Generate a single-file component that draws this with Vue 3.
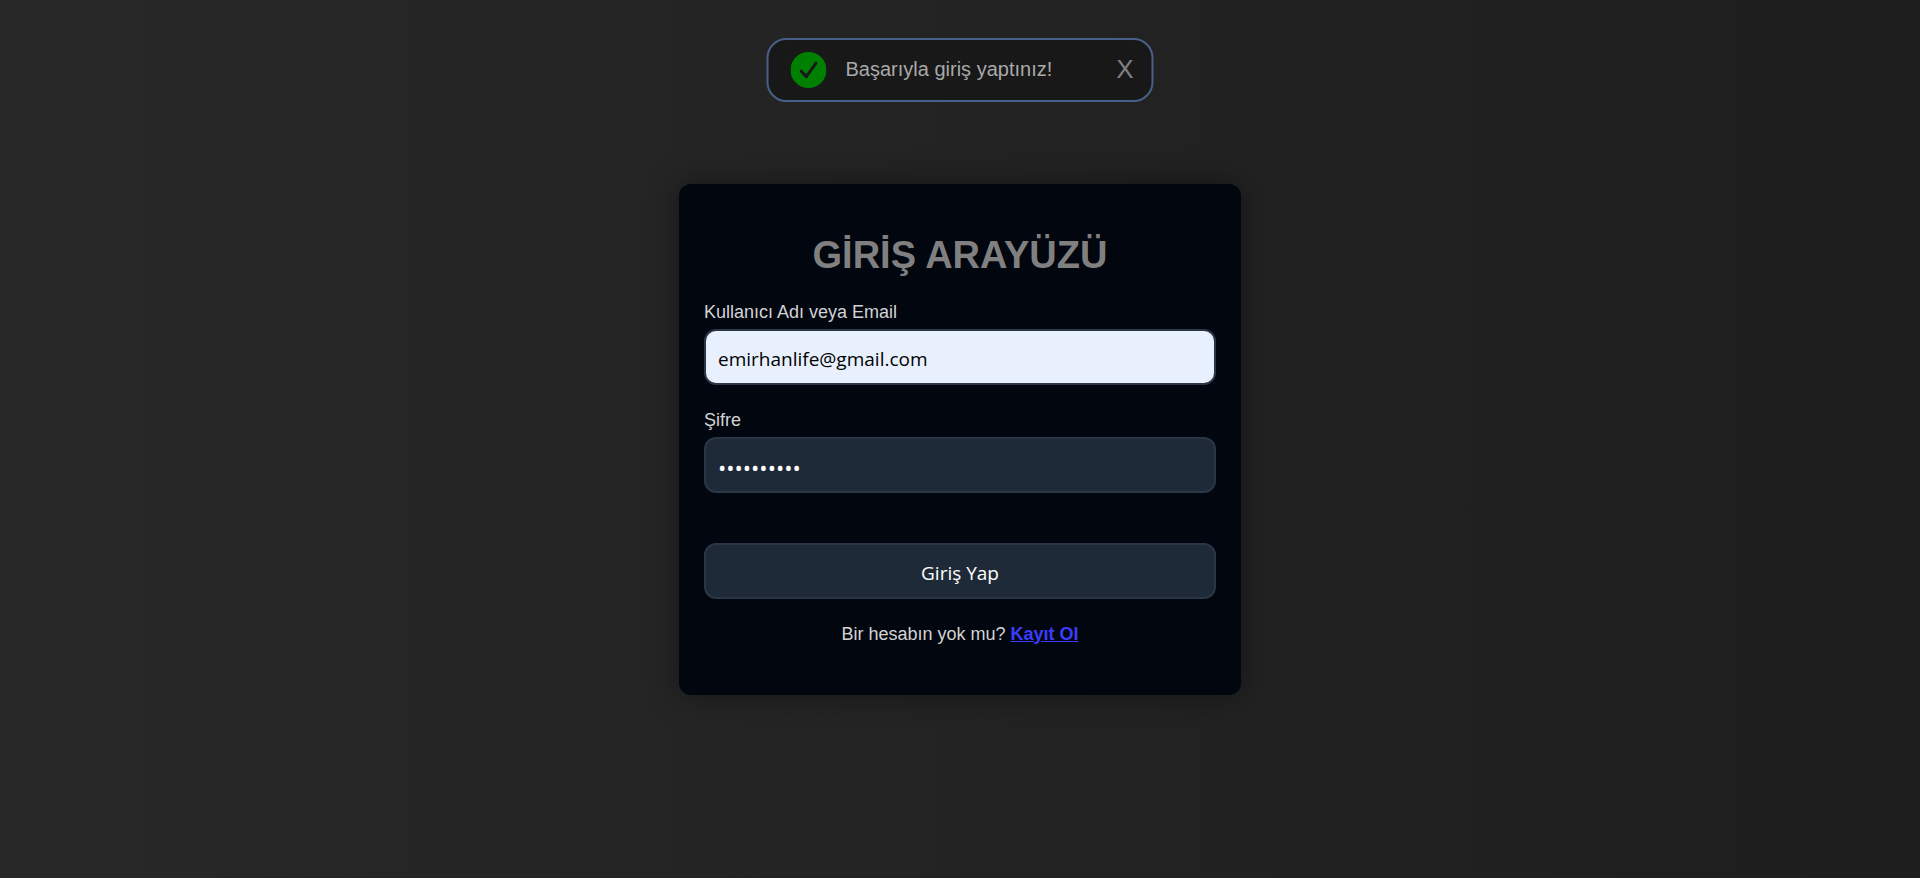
<script setup>
import { ref } from 'vue'

const account = ref('emirhanlife@gmail.com')
const password = ref('sifre12345')
const toastOpen = ref(true)
</script>

<template>
  <div class="page">
    <div v-if="toastOpen" class="toast" role="status">
      <svg class="toast-icon" viewBox="0 0 36 36" aria-hidden="true">
        <circle cx="18" cy="18" r="18" fill="#008000" />
        <path d="M10.7 19.2 L15.8 24.6 L25.5 11.2" fill="none" stroke="#181818" stroke-width="3" stroke-linecap="round" stroke-linejoin="round" />
      </svg>
      <span class="toast-text">Başarıyla giriş yaptınız!</span>
      <button class="toast-close" type="button" @click="toastOpen = false">X</button>
    </div>

    <form class="card" @submit.prevent>
      <h1>GİRİŞ ARAYÜZÜ</h1>
      <label for="account">Kullanıcı Adı veya Email</label>
      <input id="account" v-model="account" class="control filled" type="text" />
      <label for="password">Şifre</label>
      <input id="password" v-model="password" class="control secret" type="password" />
      <button class="control submit" type="submit">Giriş Yap</button>
      <p>Bir hesabın yok mu? <a href="#">Kayıt Ol</a></p>
    </form>
  </div>
</template>

<style>
body {
  margin: 0;
}
</style>

<style scoped>
.page {
  box-sizing: border-box;
  min-height: 100vh;
  display: flex;
  align-items: center;
  justify-content: center;
  background: linear-gradient(to right, #282828, #1e1e1e);
  font-family: "Liberation Sans", Arial, sans-serif;
}

.toast {
  position: absolute;
  top: 38px;
  left: 50%;
  transform: translateX(-50%);
  box-sizing: border-box;
  width: 387px;
  height: 64px;
  padding: 0 18px 0 22px;
  display: flex;
  align-items: center;
  border: 2px solid #486088;
  border-radius: 20px;
  background: #181818;
}

.toast-icon {
  width: 36px;
  height: 36px;
}

.toast-text {
  flex: 1;
  margin-left: 19px;
  padding-bottom: 2px;
  font-size: 20px;
  color: #a9a9a9;
}

.toast-close {
  padding: 0 0 2px;
  border: 0;
  background: none;
  font-family: inherit;
  font-size: 26px;
  line-height: 32px;
  color: #808080;
  cursor: pointer;
}

.card {
  box-sizing: border-box;
  width: 562px;
  max-width: 100%;
  padding: 49px 25px;
  display: flex;
  flex-direction: column;
  border-radius: 12px;
  background: #01060f;
  box-shadow: 0 0 30px rgba(0, 0, 0, 0.4);
}

h1 {
  margin: 0 0 25px;
  font-size: 38px;
  line-height: 44px;
  text-align: center;
  color: #808080;
}

label {
  margin-bottom: 7px;
  font-size: 18px;
  line-height: 20px;
  color: #d3d3d3;
}

.control {
  box-sizing: border-box;
  width: 100%;
  height: 56px;
  margin: 0 0 25px;
  padding: 4px 12px 0;
  border: 2px solid #2a3646;
  border-radius: 12px;
  background: #1f2a38;
  font-family: "Segoe UI", "Open Sans", sans-serif;
  font-size: 19px;
  color: #fff;
}

.filled {
  background: #e8f0fe;
  color: #000;
}

.secret {
  font-size: 22px;
}

.submit {
  margin: 25px 0 23px;
  cursor: pointer;
}

p {
  margin: 0;
  font-size: 18px;
  line-height: 24px;
  text-align: center;
  color: #d3d3d3;
}

a {
  font-weight: bold;
  color: #3c3cff;
}
</style>
